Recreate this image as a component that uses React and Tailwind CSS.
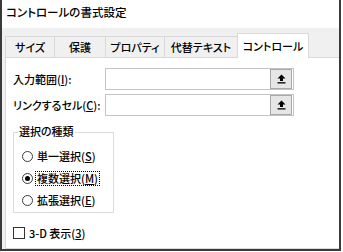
import { useState } from 'react'

const font = '[font-family:"Noto_Sans_CJK_JP",sans-serif] [font-feature-settings:"palt"] font-medium'

const tabs = [
  { label: 'サイズ', w: 'w-[50px]' },
  { label: '保護', w: 'w-[52px]' },
  { label: 'プロパティ', w: 'w-[60px]' },
  { label: '代替テキスト', w: 'w-[74px]' },
  { label: 'コントロール', w: 'w-[72px]' },
]

const Key = ({ children }) => <span className="underline underline-offset-[1px]">{children}</span>

const PickButton = () => (
  <div className="flex h-[20px] w-[22px] items-center justify-center border border-[#a8a8a8] bg-[#e6e6e6]">
    <svg width="9" height="10" viewBox="0 0 9 10">
      <path d="M4.5 0.5 L8.5 4.5 L6 4.5 L6 7 L3 7 L3 4.5 L0.5 4.5 Z" fill="#000" />
      <rect x="0.5" y="8.2" width="8" height="1.3" fill="#000" />
    </svg>
  </div>
)

const RangeRow = ({ label, k, suffix }) => (
  <div className="flex h-[22px] items-center">
    <span className="w-[92px] shrink-0 text-[11px] leading-none">
      {label}(<Key>{k}</Key>){suffix}
    </span>
    <div className="flex h-[22px] w-[189px] items-center justify-end border border-[#c4c4c4] bg-white pr-px">
      <PickButton />
    </div>
  </div>
)

const Radio = ({ checked, label, k, focused }) => (
  <div className="flex h-[22px] items-center pl-[8px]">
    <span className="flex h-[11px] w-[11px] items-center justify-center rounded-full border border-[#3c3c3c] bg-white">
      {checked && <span className="h-[5px] w-[5px] rounded-full bg-black" />}
    </span>
    <span
      className={
        'ml-[2px] border border-dotted px-px text-[11px] leading-[13px] ' +
        (focused ? 'border-black' : 'border-transparent')
      }
    >
      {label}(<Key>{k}</Key>)
    </span>
  </div>
)

export default function App() {
  const [active] = useState(4)

  return (
    <div className={`h-[252px] w-[343px] bg-white text-black ${font}`}>
      <div className="flex h-[251px] w-[341px] flex-col border-x-2 border-b-2 border-[#3a3a3a]">
        <div className="h-[28px] shrink-0 bg-white pl-[4px] pt-[6px] text-[11.5px] leading-[13px]">
          コントロールの書式設定
        </div>

        <div className="flex flex-1 flex-col bg-[#f0f0f0]">
          <div className="flex h-[29px] items-end pl-[3px]">
            {tabs.map((tab, i) =>
              i === active ? (
                <div
                  key={tab.label}
                  className={`${tab.w} relative z-10 -mb-px -ml-px flex h-[25px] items-center justify-center border border-b-0 border-[#d9d9d9] bg-white text-[11px]`}
                >
                  {tab.label}
                </div>
              ) : (
                <div
                  key={tab.label}
                  className={`${tab.w} ${i > 0 ? '-ml-px' : ''} flex h-[21px] items-center justify-center border border-b-0 border-[#d9d9d9] text-[11px]`}
                >
                  {tab.label}
                </div>
              )
            )}
          </div>

          <div className="ml-[3px] flex-1 border border-r-0 border-[#d9d9d9] bg-white pl-[7px] pt-[10px]">
            <div className="flex flex-col gap-[4px]">
              <RangeRow label="入力範囲" k="I" suffix=":" />
              <RangeRow label="リンクするセル" k="C" suffix=":" />
            </div>

            <div className="relative mt-[16px] w-[101px] border border-[#dcdcdc] pb-px pt-[12px]">
              <span className="absolute left-[4px] top-[-8px] bg-white px-px text-[11px] leading-[13px]">
                選択の種類
              </span>
              <Radio label="単一選択" k="S" />
              <Radio label="複数選択" k="M" checked focused />
              <Radio label="拡張選択" k="E" />
            </div>

            <div className="mt-[12px] flex h-[16px] items-center">
              <span className="h-[12px] w-[12px] border border-[#333] bg-white" />
              <span className="ml-[4px] text-[11px] leading-none">
                3-D 表示(<Key>3</Key>)
              </span>
            </div>
          </div>
        </div>
      </div>
    </div>
  )
}
